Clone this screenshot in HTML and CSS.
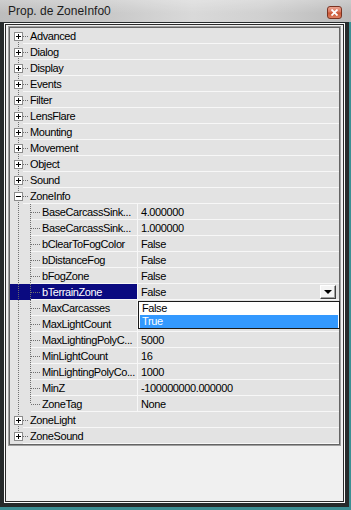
FILE: index.html
```html
<!DOCTYPE html>
<html>
<head>
    <title>Prop. de ZoneInfo0</title>
    <link rel="stylesheet" href="styles.css">
</head>
<body>
    <div class="window">
        <div class="titlebar">
            <span class="title">Prop. de ZoneInfo0</span>
            <span class="close">
                <svg width="7" height="7" viewBox="0 0 7 7"><path d="M0.5 0.5 L6.5 6.5 M6.5 0.5 L0.5 6.5" stroke="#fff" stroke-width="1.8"/></svg>
            </span>
        </div>

        <div class="shell">
            <div class="frame">
                <div class="frame-inner">
                    <div class="panel">
                        <div class="grid">
                            <div class="rows">
                                <!-- top level categories -->
                                <div class="row"><span class="g g-root first"><i class="box plus"></i></span><span class="item">Advanced</span></div>
                                <div class="row"><span class="g g-root"><i class="box plus"></i></span><span class="item">Dialog</span></div>
                                <div class="row"><span class="g g-root"><i class="box plus"></i></span><span class="item">Display</span></div>
                                <div class="row"><span class="g g-root"><i class="box plus"></i></span><span class="item">Events</span></div>
                                <div class="row"><span class="g g-root"><i class="box plus"></i></span><span class="item">Filter</span></div>
                                <div class="row"><span class="g g-root"><i class="box plus"></i></span><span class="item">LensFlare</span></div>
                                <div class="row"><span class="g g-root"><i class="box plus"></i></span><span class="item">Mounting</span></div>
                                <div class="row"><span class="g g-root"><i class="box plus"></i></span><span class="item">Movement</span></div>
                                <div class="row"><span class="g g-root"><i class="box plus"></i></span><span class="item">Object</span></div>
                                <div class="row"><span class="g g-root"><i class="box plus"></i></span><span class="item">Sound</span></div>
                                <div class="row"><span class="g g-root"><i class="box"></i></span><span class="item">ZoneInfo</span></div>

                                <!-- ZoneInfo properties -->
                                <div class="row"><span class="g g-root"></span><span class="g g-child"></span><span class="name">BaseCarcassSink...</span><span class="value">4.000000</span></div>
                                <div class="row"><span class="g g-root"></span><span class="g g-child"></span><span class="name">BaseCarcassSink...</span><span class="value">1.000000</span></div>
                                <div class="row"><span class="g g-root"></span><span class="g g-child"></span><span class="name">bClearToFogColor</span><span class="value">False</span></div>
                                <div class="row"><span class="g g-root"></span><span class="g g-child"></span><span class="name">bDistanceFog</span><span class="value">False</span></div>
                                <div class="row"><span class="g g-root"></span><span class="g g-child"></span><span class="name">bFogZone</span><span class="value">False</span></div>
                                <div class="row selected"><span class="g g-root"></span><span class="g g-child"></span><span class="name">bTerrainZone</span><span class="value">False<span class="drop-btn"><i></i></span></span></div>
                                <div class="row"><span class="g g-root"></span><span class="g g-child"></span><span class="name">MaxCarcasses</span><span class="value"></span></div>
                                <div class="row"><span class="g g-root"></span><span class="g g-child"></span><span class="name">MaxLightCount</span><span class="value"></span></div>
                                <div class="row"><span class="g g-root"></span><span class="g g-child"></span><span class="name">MaxLightingPolyC...</span><span class="value">5000</span></div>
                                <div class="row"><span class="g g-root"></span><span class="g g-child"></span><span class="name">MinLightCount</span><span class="value">16</span></div>
                                <div class="row"><span class="g g-root"></span><span class="g g-child"></span><span class="name">MinLightingPolyCo...</span><span class="value">1000</span></div>
                                <div class="row"><span class="g g-root"></span><span class="g g-child"></span><span class="name">MinZ</span><span class="value">-100000000.000000</span></div>
                                <div class="row"><span class="g g-root"></span><span class="g g-child last"></span><span class="name">ZoneTag</span><span class="value">None</span></div>

                                <div class="row"><span class="g g-root"><i class="box plus"></i></span><span class="item">ZoneLight</span></div>
                                <div class="row"><span class="g g-root last"><i class="box plus"></i></span><span class="item">ZoneSound</span></div>

                                <div class="dropdown">
                                    <div class="opt">False</div>
                                    <div class="opt active">True</div>
                                </div>
                            </div>
                        </div>
                    </div>
                </div>
            </div>
        </div>
    </div>
</body>
</html>
```

FILE: styles.css
```css
* {
    box-sizing: border-box;
}

body {
    margin: 0;
    font-family: "Liberation Sans", Arial, sans-serif;
}

.window {
    width: 351px;
    height: 510px;
    display: flex;
    flex-direction: column;
    background: #f0f0f0;
}

/* caption */
.titlebar {
    height: 22px;
    flex: none;
    display: flex;
    align-items: center;
    justify-content: space-between;
    padding: 0 9px 0 8px;
    background:
        linear-gradient(to bottom, rgba(255, 255, 255, 0.25), rgba(255, 255, 255, 0) 60%),
        linear-gradient(to right, #bdbdbd 0%, #c8c8c8 30%, #d9d9d9 55%, #d0d0d0 75%, #bababa 100%);
}

.title {
    font-size: 12px;
    color: #1c1c1c;
}

.close {
    width: 15px;
    height: 13px;
    margin-top: 2px;
    display: flex;
    align-items: center;
    justify-content: center;
    border: 1px solid #7a3322;
    border-radius: 3px;
    background: linear-gradient(to bottom, #eba28f 0%, #d9735a 48%, #c8522f 52%, #de8062 100%);
}

/* window frame */
.shell {
    flex: 1;
    display: flex;
    border-right: 2px solid #3c8e93;
    border-bottom: 3px solid #3c8e93;
}

.frame {
    flex: 1;
    display: flex;
    border: 4px solid #262a2b;
    border-top-width: 1px;
}

.frame-inner {
    flex: 1;
    display: flex;
    border: 1px solid #fafafa;
}

.panel {
    flex: 1;
    border: 1px solid #2b2b2b;
    background: #f0f0f0;
    padding: 1px 2px;
}

/* property grid */
.grid {
    border: 1px solid #a0a0a0;
}

.rows {
    position: relative;
    border: 1px solid #646464;
    background: #e3e3e3;
    font-size: 11px;
    letter-spacing: -0.4px;
    color: #000;
}

.row {
    display: flex;
    height: 16px;
}

.g {
    flex: none;
    height: 16px;
    position: relative;
    background-image: repeating-linear-gradient(to bottom, #707070 0 1px, transparent 1px 2px);
    background-repeat: no-repeat;
    background-size: 1px 16px;
}

.g-root {
    width: 13px;
    background-position: 8px 0;
}

.g-root.first {
    background-position: 8px 8px;
    background-size: 1px 8px;
}

.g-root.last {
    background-size: 1px 8px;
}

.g-child {
    width: 8px;
    background-position: 7px 0;
}

.g-child.last {
    background-size: 1px 8px;
}

.box {
    position: absolute;
    left: 4px;
    top: 4px;
    width: 9px;
    height: 9px;
    border: 1px solid #8c8c8c;
    background: #fff;
}

.box::before {
    content: '';
    position: absolute;
    left: 1px;
    top: 3px;
    width: 5px;
    height: 1px;
    background: #000;
}

.box.plus::after {
    content: '';
    position: absolute;
    left: 3px;
    top: 1px;
    width: 1px;
    height: 5px;
    background: #000;
}

.item,
.name,
.value {
    height: 16px;
    padding-top: 1px;
    line-height: 15px;
    border-bottom: 1px solid #f7f7f7;
    white-space: nowrap;
    overflow: hidden;
    background-image: repeating-linear-gradient(to right, #707070 0 1px, transparent 1px 2px);
    background-repeat: no-repeat;
}

.item {
    flex: 1;
    padding-left: 7px;
    background-size: 6px 1px;
    background-position: 0 8px;
}

.name {
    width: 106px;
    flex: none;
    padding-left: 11px;
    background-size: 10px 1px;
    background-position: 0 8px;
}

.value {
    flex: 1;
    display: flex;
    align-items: flex-start;
    padding-left: 3px;
    border-left: 1px solid #f7f7f7;
    background-image: none;
}

.row.selected .g,
.row.selected .name {
    background-color: #0a0a80;
}

.row.selected .name {
    color: #fff;
}

.drop-btn {
    margin-left: auto;
    margin-right: 3px;
    width: 16px;
    height: 14px;
    display: flex;
    align-items: center;
    justify-content: center;
    background: #f4f4f4;
    border: 1px solid;
    border-color: #fff #404040 #404040 #fff;
    box-shadow: inset -1px -1px 0 #a0a0a0;
}

.drop-btn i {
    width: 0;
    height: 0;
    border-left: 4px solid transparent;
    border-right: 4px solid transparent;
    border-top: 4px solid #000;
}

/* open dropdown list */
.dropdown {
    position: absolute;
    left: 128px;
    top: 273px;
    width: 202px;
    height: 28px;
    border: 1px solid #1a1a1a;
    background: #fff;
}

.opt {
    height: 13px;
    line-height: 13px;
    padding-left: 2px;
    margin: 0 1px;
}

.opt.active {
    background: #3399ff;
    color: #fff;
}
```
